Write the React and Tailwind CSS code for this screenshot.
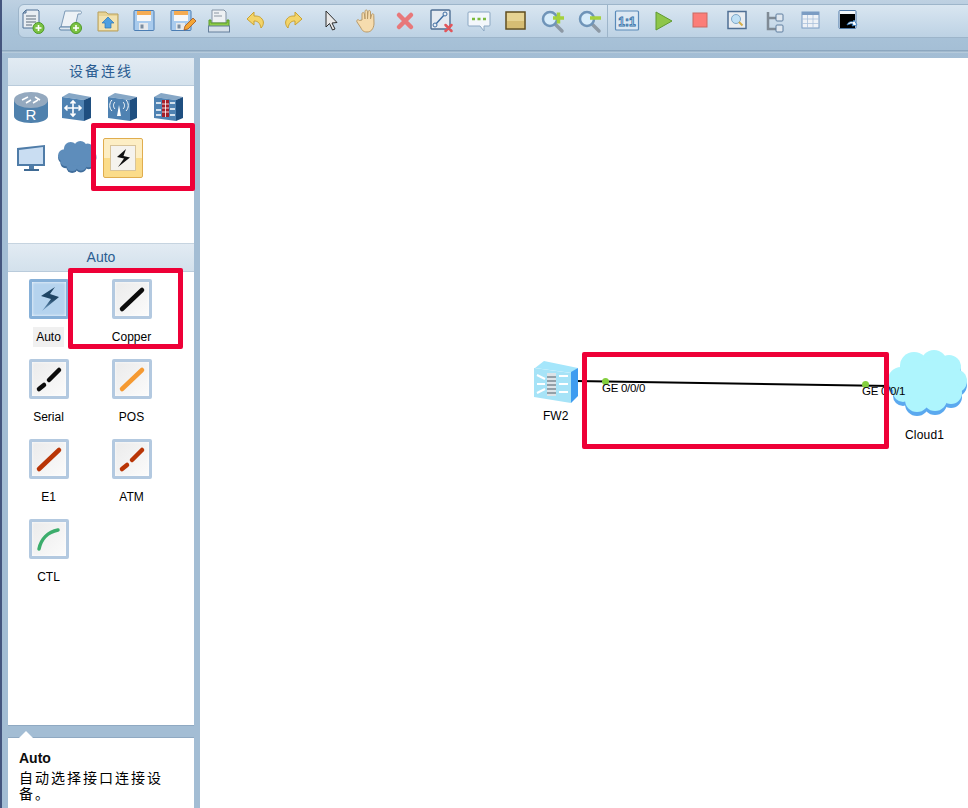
import React from "react";

const CJK = { fontFamily: '"Liberation Sans", "Noto Sans CJK SC", sans-serif' };

// toolbar icons, all on a 28x28 box
const NewTopo = () => (
  <svg width="28" height="28" viewBox="0 0 28 28">
    <path d="M7 3h12l1 1v17H4V6z" fill="#e8edf2" stroke="#4d6f94" strokeWidth="1" />
    <path d="M7 3v3H4z" fill="#b8c4d0" stroke="#4d6f94" strokeWidth="1" />
    <path d="M7 9h10M7 12h10M7 15h10M7 18h6" stroke="#8b96a2" strokeWidth="1.5" />
    <circle cx="19.5" cy="21" r="5.5" fill="#7cc243" stroke="#4c9a28" />
    <path d="M19.5 18v6M16.5 21h6" stroke="#fff" strokeWidth="1.6" />
  </svg>
);
const NewScript = () => (
  <svg width="28" height="28" viewBox="0 0 28 28">
    <path d="M8 4h15c2 0 2 3 0 3h-2l-3 13H4z" fill="#edf2f6" stroke="#7d9ab6" />
    <path d="M3 20h14c1 1 1 3 0 3H4c-2 0-2-2-1-3z" fill="#dfe8f0" stroke="#5f84a8" />
    <circle cx="19" cy="21" r="5.5" fill="#7cc243" stroke="#4c9a28" />
    <path d="M19 18v6M16 21h6" stroke="#fff" strokeWidth="1.6" />
  </svg>
);
const OpenFile = () => (
  <svg width="28" height="28" viewBox="0 0 28 28">
    <path d="M4 5h8l2 2h10v17H4z" fill="#e7d394" stroke="#b79f5c" />
    <path d="M5 9h18v14H5z" fill="#f1e2b0" />
    <path d="M14 10l6 6h-3v5h-6v-5H8z" fill="#4d9fe0" stroke="#2b76b5" strokeWidth="0.7" />
  </svg>
);
const Save = ({ pen }) => (
  <svg width="28" height="28" viewBox="0 0 28 28">
    <rect x="3" y="3.5" width="20" height="20" rx="1" fill="#a9cbed" stroke="#4b7db3" />
    <rect x="6" y="4" width="14" height="4" fill="#f5ab52" />
    <rect x="6" y="8" width="14" height="6" fill="#f7f7f7" />
    <rect x="8" y="16" width="9" height="7" fill="#e6e9ec" />
    <rect x="9.5" y="17.5" width="3" height="4" fill="#7b8da0" />
    {pen && <path d="M16 23l1-4 8-8 3 3-8 8z" fill="#f4a534" stroke="#a5541b" strokeWidth="0.8" />}
  </svg>
);
const Print = () => (
  <svg width="28" height="28" viewBox="0 0 28 28">
    <path d="M7 3h12l2 2v11H7z" fill="#eef1f4" stroke="#8393a4" />
    <path d="M9 6h5M9 9h8" stroke="#8b96a2" />
    <path d="M4 13h2v3h16v-3h2v7H4z" fill="#8ccb46" stroke="#5b9a28" />
    <rect x="3.5" y="19" width="21" height="6" fill="#d5dfe9" stroke="#657f9b" />
  </svg>
);
const Arrow = ({ flip }) => (
  <svg width="28" height="28" viewBox="0 0 28 28">
    <g transform={flip ? "translate(28 0) scale(-1 1)" : undefined}>
      <path d="M12 5L5 12l7 6v-4c4 0 6 2 7 7 3-3 3-7 1-9-2-3-5-3-8-3z" fill="#f3d469" stroke="#c9a232" strokeLinejoin="round" />
    </g>
  </svg>
);
const Pointer = () => (
  <svg width="28" height="28" viewBox="0 0 28 28">
    <path d="M9 4l0 16 3.500-3.500 3 6.500 2.500-1-3-6 5-.5z" fill="#e9e9e9" stroke="#2d2d2d" strokeLinejoin="round" />
  </svg>
);
const Hand = () => (
  <svg width="28" height="28" viewBox="0 0 28 28">
    <path d="M8 13V7c0-2 2-2 2.400 0L11 12V4.500c0-2 2.500-2 2.500 0V12l.5-7c.2-2 2.500-2 2.500 0V12l1-4c.5-2 2.500-1.500 2.300.5L20 17c-.5 5-3 8-7 8-4 0-5-2-6-4l-4-6c-1-2 1-3 2.500-1.500z" fill="#f6dcae" stroke="#b99a68" />
  </svg>
);
const Cross = () => (
  <svg width="28" height="28" viewBox="0 0 28 28">
    <path d="M8 8l12 12M20 8L8 20" stroke="#e8787a" strokeWidth="4.500" strokeLinecap="round" />
  </svg>
);
const DelLink = () => (
  <svg width="28" height="28" viewBox="0 0 28 28">
    <rect x="3" y="3" width="19" height="19" rx="1" fill="#e4eaf1" stroke="#4f6f94" strokeWidth="1.400" />
    <path d="M7 18L17 7" stroke="#3f6ea3" strokeWidth="1.400" />
    <circle cx="7" cy="18" r="2" fill="#e9eef3" stroke="#3f6ea3" />
    <circle cx="17" cy="7" r="2" fill="#e9eef3" stroke="#3f6ea3" />
    <path d="M17.500 18l6 6M23.500 18l-6 6" stroke="#e2555a" strokeWidth="2.500" strokeLinecap="round" />
  </svg>
);
const Note = () => (
  <svg width="28" height="28" viewBox="0 0 28 28">
    <path d="M4 5h20a1 1 0 0 1 1 1v12a1 1 0 0 1-1 1h-5v5l-4-5H4a1 1 0 0 1-1-1V6a1 1 0 0 1 1-1z" fill="#f3f7fb" stroke="#8ba7c2" />
    <path d="M7 12h3M12.500 12h3M18 12h3" stroke="#7cba3d" strokeWidth="2.500" />
  </svg>
);
const Rect = () => (
  <svg width="28" height="28" viewBox="0 0 28 28">
    <rect x="4" y="5" width="19" height="17" fill="#e6d393" stroke="#5f4c1e" strokeWidth="1.500" />
    <rect x="5" y="14" width="17" height="7" fill="#d6bd74" />
  </svg>
);
const Zoom = ({ minus }) => (
  <svg width="28" height="28" viewBox="0 0 28 28">
    <path d="M16 17l7 7" stroke="#8d99a5" strokeWidth="3.500" strokeLinecap="round" />
    <circle cx="11" cy="12" r="7" fill="#d7ecfa" stroke="#6f94b8" strokeWidth="2.500" />
    <path d={minus ? "M14 11h11" : "M14 11h11M19.500 5.500v11"} stroke="#a5d13d" strokeWidth="3.500" />
  </svg>
);
const OneToOne = () => (
  <svg width="28" height="28" viewBox="0 0 28 28">
    <rect x="2.500" y="4" width="23" height="19" rx="1" fill="#dce8f3" stroke="#5a8ab8" strokeWidth="1.200" />
    <text x="14" y="18.500" textAnchor="middle" fontSize="12" fontWeight="700" fontFamily="Liberation Sans" fill="#dce8f3" stroke="#2f6ea8" strokeWidth="0.800">1:1</text>
  </svg>
);
const Play = () => (
  <svg width="28" height="28" viewBox="0 0 28 28">
    <path d="M6 5l16 9L6 23z" fill="#8ec64a" stroke="#5f9a30" />
  </svg>
);
const Stop = () => (
  <svg width="28" height="28" viewBox="0 0 28 28">
    <rect x="6" y="6" width="14" height="14" fill="#fb7d78" stroke="#c96a62" />
  </svg>
);
const Capture = () => (
  <svg width="28" height="28" viewBox="0 0 28 28">
    <rect x="4" y="4.500" width="18" height="17" fill="#e9edf1" stroke="#4f6f94" strokeWidth="1.500" />
    <circle cx="12" cy="12" r="4.500" fill="#bfe0f5" stroke="#7fa7c8" />
    <path d="M15 15l3.500 3.500" stroke="#d5ae4a" strokeWidth="2" />
  </svg>
);
const Tree = () => (
  <svg width="28" height="28" viewBox="0 0 28 28">
    <path d="M7 5v17h8M7 11h8" stroke="#7f8a95" strokeWidth="2.500" fill="none" />
    <rect x="15" y="7" width="7" height="7" rx="1" fill="#dfe7ef" stroke="#5f7ea0" />
    <rect x="15" y="18" width="7" height="7" rx="1" fill="#dfe7ef" stroke="#5f7ea0" />
  </svg>
);
const Table = () => (
  <svg width="28" height="28" viewBox="0 0 28 28">
    <rect x="4" y="5" width="17" height="16" fill="#eef2f7" stroke="#7b9cc3" />
    <rect x="4" y="5" width="17" height="3" fill="#7b9cc3" />
    <path d="M4 12h17M4 16.500h17M9.500 8v13M15 8v13" stroke="#a9c0da" strokeWidth="0.800" />
  </svg>
);
const Console = () => (
  <svg width="28" height="28" viewBox="0 0 28 28">
    <rect x="4" y="3.500" width="17" height="18" rx="1" fill="#f3f6f9" stroke="#4f79a8" />
    <rect x="5" y="7" width="15" height="14" fill="#000" />
    <path d="M12 18c1-3 4-4 6-3l1-2 3 5-5 1 1-2c-2-.5-3 0-6 1z" fill="#fff" stroke="#2f78c0" strokeWidth="0.800" />
  </svg>
);

// device picker icons
const boxSides = (top, side, front) => (
  <>
    <path d="M2 6l7-4 22 4-7 3z" fill={top} />
    <path d="M24 9l7-3v21l-7 3z" fill={side} />
    <path d="M2 6l22 3v21L2 27z" fill={front} />
  </>
);
const Router = () => (
  <svg width="36" height="34" viewBox="0 0 36 34">
    <path d="M1 9v16c0 4 7 7 17 7s17-3 17-7V9z" fill="#4f81ad" />
    <ellipse cx="18" cy="9" rx="17" ry="8" fill="#94a9bf" />
    <path d="M9 9l6-3M13 12l5-3M22 6l5 3M20 12l5-3" stroke="#fff" strokeWidth="1.500" />
    <text x="18" y="29" textAnchor="middle" fontSize="15" fontFamily="Liberation Sans" fill="#fff">R</text>
  </svg>
);
const Switch = () => (
  <svg width="34" height="32" viewBox="0 0 34 32">
    {boxSides("#86a7c6", "#1f4f80", "#4f82b2")}
    <path d="M13 10v15M5 17h16M10.500 12.500L13 10l2.500 2.500M10.500 22.500L13 25l2.500-2.500M7.500 14.500L5 17l2.500 2.500M18.500 14.500L21 17l-2.500 2.500" stroke="#fff" strokeWidth="1.600" fill="none" />
  </svg>
);
const Wireless = () => (
  <svg width="34" height="32" viewBox="0 0 34 32">
    {boxSides("#86a7c6", "#1f4f80", "#4f82b2")}
    <path d="M13 14l-2 11h4z" fill="#fff" />
    <path d="M9 11c-2 2-2 5 0 7M17 11c2 2 2 5 0 7M6 9c-3 3-3 8 0 11M20 9c3 3 3 8 0 11" stroke="#fff" fill="none" />
  </svg>
);
const FirewallDark = () => (
  <svg width="34" height="32" viewBox="0 0 34 32">
    {boxSides("#86a7c6", "#1f4f80", "#4f82b2")}
    <rect x="10" y="9" width="7" height="17" fill="#a5202a" />
    <path d="M10 13h7M10 17h7M10 21h7M13.500 9v17" stroke="#fff" strokeWidth="0.800" />
    <path d="M4 12h5M4 19h5M4 24h5M18 12h5M18 18h5M18 24h5" stroke="#fff" strokeWidth="1.300" />
  </svg>
);
const Monitor = () => (
  <svg width="30" height="30" viewBox="0 0 30 30">
    <path d="M1 5l28-3v21H1z" fill="#4f7ca8" />
    <path d="M3 7l24-3v17H3z" fill="#c9ddf2" />
    <path d="M13 23h5v3h-5z" fill="#4f7ca8" />
    <path d="M8 26h15v2H8z" fill="#3f6a94" />
  </svg>
);
const bumps = [
  [14, 30, 13], [27, 16, 14], [47, 13, 13], [62, 17, 12], [68, 31, 12],
  [64, 43, 11], [48, 49, 12], [30, 50, 12], [16, 42, 10],
];
const CloudSolid = ({ w, h, fill, shade }) => (
  <svg width={w} height={h} viewBox="0 0 80 70">
    <g fill={shade} transform="translate(0 4)">
      {bumps.map(([x, y, r]) => <circle key={`${x}-${y}`} cx={x} cy={y} r={r} />)}
    </g>
    <g fill={fill}>
      {bumps.map(([x, y, r]) => <circle key={`${x}-${y}`} cx={x} cy={y} r={r} />)}
      <ellipse cx="40" cy="30" rx="30" ry="20" />
    </g>
  </svg>
);

const LinkBtn = ({ active, children }) => (
  <div className={`flex h-[40px] w-[40px] items-center justify-center rounded-[2px] border-[3px] shadow-[inset_0_0_3px_#fff] ${active ? "border-[#86b0d8] bg-[#b5d3ee]" : "border-[#b3c9e0] bg-gradient-to-br from-[#ebebeb] to-[#fbfbfb]"}`}>
    {children}
  </div>
);
const Bolt = ({ fill, size = 24 }) => (
  <svg width={size} height={size} viewBox="0 0 24 24">
    <path d="M15 3L6 11l7 1.500L7 21l12-9.500-6.500-1.500z" fill={fill} />
  </svg>
);
const AutoBolt = () => (
  <svg width="30" height="30" viewBox="0 0 30 30">
    <defs>
      <linearGradient id="autoFade" x1="0" y1="0" x2="0" y2="1">
        <stop offset="0.5" stopColor="#1f4565" />
        <stop offset="1" stopColor="#7aa7cf" />
      </linearGradient>
    </defs>
    <path d="M21 3L7 12l10 3-9 12 17-14-9-3z" fill="url(#autoFade)" />
  </svg>
);
const Stroke = ({ color, dash, width = 4.500 }) => (
  <svg width="34" height="34" viewBox="0 0 34 34">
    {dash ? (
      <>
        <path d="M7 27l5-4" stroke={color} strokeWidth={width} strokeLinecap="round" />
        <path d="M17 18l10-10" stroke={color} strokeWidth={width} strokeLinecap="round" />
      </>
    ) : (
      <path d="M7 27L27 8" stroke={color} strokeWidth={width} strokeLinecap="round" />
    )}
  </svg>
);

const links = [
  { name: "Auto", active: true, icon: <AutoBolt /> },
  { name: "Copper", icon: <Stroke color="#0c0c0c" /> },
  { name: "Serial", icon: <Stroke color="#0c0c0c" dash /> },
  { name: "POS", icon: <Stroke color="#f59a32" /> },
  { name: "E1", icon: <Stroke color="#b93506" /> },
  { name: "ATM", icon: <Stroke color="#b93506" dash /> },
  {
    name: "CTL",
    icon: (
      <svg width="34" height="34" viewBox="0 0 34 34">
        <path d="M7 27C9 17 16 10 26 8" stroke="#3cad6c" strokeWidth="3.500" fill="none" strokeLinecap="round" />
      </svg>
    ),
  },
];

const toolsA = [
  <NewTopo />, <NewScript />, <OpenFile />, <Save />, <Save pen />, <Print />, <Arrow />, <Arrow flip />,
  <Pointer />, <Hand />, <Cross />, <DelLink />, <Note />, <Rect />, <Zoom />, <Zoom minus />,
];
const toolsB = [<OneToOne />, <Play />, <Stop />, <Capture />, <Tree />, <Table />, <Console />];

function PanelTitle({ children }) {
  return (
    <div className="flex h-[28px] items-center justify-center border-b border-[#b9cbdb] bg-gradient-to-b from-[#e2ebf3] to-[#d3e1ec] text-[14px] text-[#2a5d92]" style={CJK}>
      {children}
    </div>
  );
}

function RedBox({ className }) {
  return <div className={`absolute rounded-[2px] border-[5px] border-[#ee0037] ${className}`} />;
}

export default function App() {
  return (
    <div className="relative flex h-[808px] w-[968px] flex-col overflow-hidden border-l-2 border-[#44557e] bg-[#a3bdd4]" style={CJK}>
      {/* Toolbar */}
      <div className="h-[58px] shrink-0 bg-gradient-to-b from-[#bed1e2] via-[#a9c3d9] to-[#a3bdd4] pt-[4px] pl-[16px]">
        <div className="-mr-[10px] flex h-[34px] items-center rounded-l-[6px] border border-[#9db5ca] bg-gradient-to-b from-[#d9e6f1] to-[#bdd2e4]">
          <div className="-ml-[5px] flex">
            {toolsA.map((icon, i) => (
              <div key={i} className={`flex w-[37px] justify-center ${i === 1 || i === 8 ? "ml-[1px]" : ""}`}>{icon}</div>
            ))}
          </div>
          <div className="-ml-[1px] h-full w-px bg-[#9db5ca]" />
          <div className="flex">
            {toolsB.map((icon, i) => (
              <div key={i} className="flex w-[37px] justify-center">{icon}</div>
            ))}
          </div>
        </div>
        <div className="mt-[12px] h-[3px] bg-gradient-to-b from-[#839fb9] to-[#c0d3e2] -ml-[16px]" />
      </div>

      <div className="flex min-h-0 flex-1">
        {/* Left column */}
        <div className="ml-[6px] flex w-[186px] shrink-0 flex-col">
          <div className="flex h-[668px] flex-col border-b border-[#8fa9c2] bg-white">
            <PanelTitle>
              <span className="tracking-[2px]">设备连线</span>
            </PanelTitle>
            <div className="h-[158px] border-b border-[#c6d4e0] pt-[5px]">
              <div className="grid grid-cols-[46px_46px_46px_46px] items-center">
                <div className="flex h-[38px] justify-center"><Router /></div>
                <div className="flex h-[38px] justify-center"><Switch /></div>
                <div className="flex h-[38px] justify-center"><Wireless /></div>
                <div className="flex h-[38px] justify-center"><FirewallDark /></div>
              </div>
              <div className="mt-[7px] grid grid-cols-[46px_46px_46px_46px] items-center">
                <div className="flex h-[44px] items-center justify-center"><Monitor /></div>
                <div className="flex h-[44px] items-center justify-center"><CloudSolid w={40} h={34} fill="#5e8dbb" shade="#406e9c" /></div>
                <div className="flex h-[44px] items-center justify-center">
                  <div className="flex h-[40px] w-[40px] items-center justify-center rounded-[2px] border border-[#e0ad4e] bg-gradient-to-b from-[#fdeec4] from-50% to-[#fbdc8a] to-50%">
                    <div className="flex h-[26px] w-[26px] items-center justify-center border border-[#d8c49a] bg-[#f5f3ee]">
                      <Bolt fill="#111" />
                    </div>
                  </div>
                </div>
              </div>
            </div>
            <PanelTitle>Auto</PanelTitle>
            <div className="grid grid-cols-[83px_83px] pt-[7px] pl-[0px] -ml-[1px]">
              {links.map((l) => (
                <div key={l.name} className="flex h-[80px] flex-col items-center">
                  <LinkBtn active={l.active}>{l.icon}</LinkBtn>
                  <span className={`text-[12px] leading-[14px] text-black ${l.active ? "mt-[8px] bg-[#f0f0f0] px-[3px] py-[3px]" : "mt-[11px]"}`}>{l.name}</span>
                </div>
              ))}
            </div>
          </div>
          {/* Description */}
          <div className="relative mt-[11px] flex-1 border-t border-[#8fa9c2] bg-white px-[11px] pt-[12px]">
            <div className="absolute -top-[7px] left-[11px] h-0 w-0 border-x-[7px] border-b-[7px] border-x-transparent border-b-white" />
            <div className="text-[14px] leading-[16px] font-bold text-[#0d0d0d]">Auto</div>
            <div className="mt-[4px] text-[14px] leading-[16px] tracking-[2px] text-black">自动选择接口连接设备。</div>
          </div>
        </div>

        {/* Topology canvas */}
        <div className="relative ml-[6px] flex-1 bg-white">
          <svg className="absolute top-0 left-0" width="768" height="750">
            <path d="M376 323L690 328" stroke="#000" strokeWidth="2" />
          </svg>
          <div className="absolute top-[302px] left-[333px]">
            <svg width="46" height="44" viewBox="0 0 46 44">
              <path d="M2 8l9-7 34 7-6 5z" fill="#a5e6fb" />
              <path d="M38 12l7-4v28l-7 7z" fill="#3f9cf0" />
              <path d="M1 8l37 5v30L1 37z" fill="#a6e3f7" />
              <rect x="14" y="13" width="9" height="23" fill="#dde3e7" />
              <path d="M14 17h9M14 21h9M14 25h9M14 29h9M14 33h9" stroke="#7c8a94" strokeWidth="1.400" />
              <path d="M4 15l8 4M4 24h8M4 33l8-4M26 16h9M26 24h9M26 32h9" stroke="#fff" strokeWidth="2" />
            </svg>
          </div>
          <span className="absolute top-[351px] left-[343px] text-[12px] leading-[14px] text-black">FW2</span>
          <div className="absolute top-[292px] left-[687px]">
            <CloudSolid w={80} h={70} fill="#aef5fd" shade="#5ba9ef" />
          </div>
          <span className="absolute top-[370px] left-[705px] text-[12px] leading-[14px] tracking-[0.2px] text-black">Cloud1</span>
          <div className="absolute top-[320px] left-[402px] h-[7px] w-[7px] rounded-full bg-[#84cf3e]" />
          <div className="absolute top-[323px] left-[662px] h-[7px] w-[7px] rounded-full bg-[#84cf3e]" />
          <span className="absolute top-[323px] left-[402px] text-[11.500px] leading-[14px] tracking-[-0.3px] text-black">GE 0/0/0</span>
          <span className="absolute top-[326px] left-[662px] text-[11.500px] leading-[14px] tracking-[-0.3px] text-black">GE 0/0/1</span>
        </div>
      </div>

      {/* Annotations */}
      <RedBox className="top-[123px] left-[89px] h-[68px] w-[104px]" />
      <RedBox className="top-[268px] left-[66px] h-[81px] w-[115px]" />
      <RedBox className="top-[352px] left-[580px] h-[97px] w-[307px]" />
    </div>
  );
}
